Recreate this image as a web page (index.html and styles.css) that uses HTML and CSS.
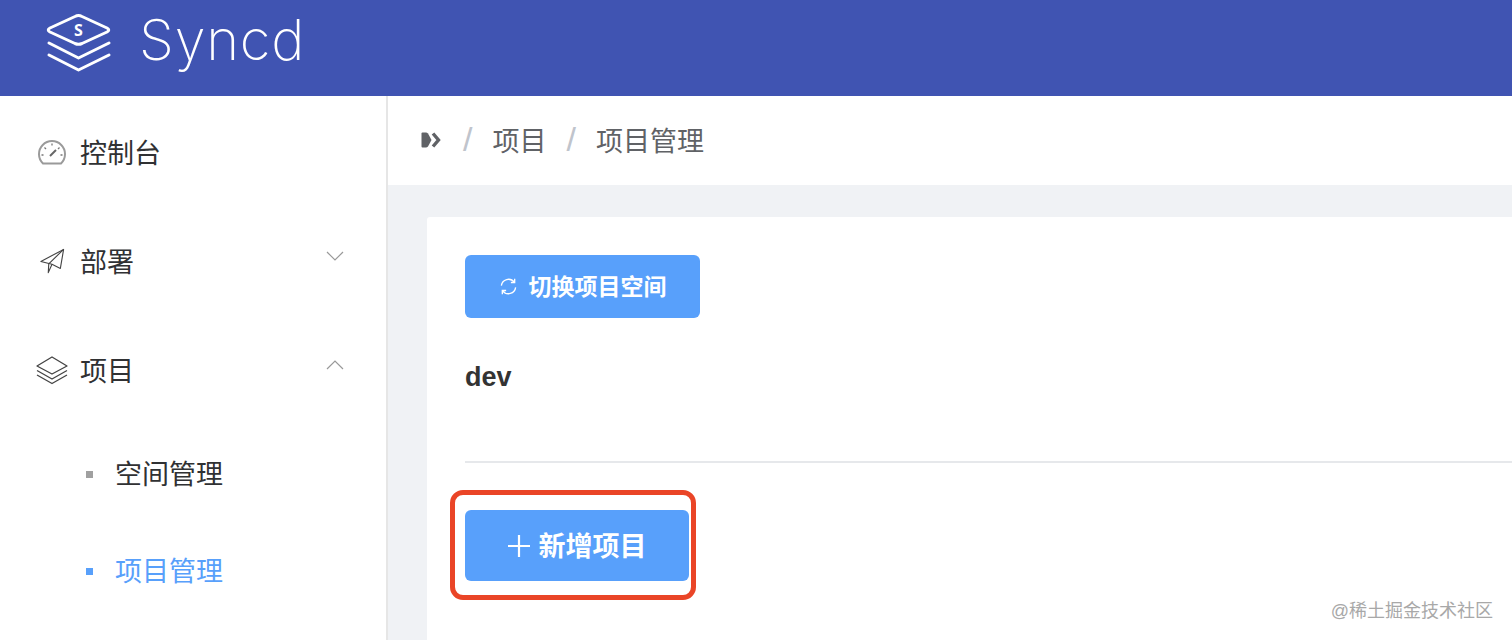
FILE: index.html
```html
<!DOCTYPE html>
<html lang="zh-CN">
<head>
<meta charset="utf-8">
<title>Syncd</title>
<link rel="stylesheet" href="styles.css">
</head>
<body>
<header class="topbar">
  <svg class="logo-mark" viewBox="0 0 65 60" fill="none" stroke="#fff" stroke-width="3" stroke-linejoin="round" stroke-linecap="round">
    <path d="M28 3.500 Q31.500 1.500 35 3.500 L60 15 Q63.500 17 60 19 L35 30.500 Q31.500 32 28 30.500 L3 19 Q-0.500 17 3 15 Z"/>
    <path d="M2 30 L31.500 45 L62 30"/>
    <path d="M2 42 L31.500 57 L62 42"/>
    <text class="logo-s" x="31.500" y="23" text-anchor="middle">S</text>
  </svg>
  <span class="brand">Syncd</span>
</header>
<div class="layout">
  <nav class="sidebar">
    <a class="nav-item">
      <svg class="nav-icon" viewBox="0 0 28 26" fill="none" stroke="#9a9a9a" stroke-width="2">
        <path d="M5 24.500 A13 13 0 1 1 23 24.500 Z" stroke-linejoin="round"/>
        <path d="M12 17 L18 11" stroke="#666" stroke-width="2"/>
        <path d="M14 4.500 V6.500 M6.500 8.500 L8 10 M21.500 8.500 L20 10 M3.500 16 H5.500 M22.500 16 H24.500" stroke="#777" stroke-width="1.300"/>
      </svg>
      <span>控制台</span>
    </a>
    <a class="nav-item">
      <svg class="nav-icon" viewBox="0 0 28 28" fill="none" stroke="#444" stroke-width="1.200" stroke-linejoin="round">
        <path d="M2 14.500 L26.500 1.500 L23 22 L14 17.500 Z"/>
        <path d="M26.500 1.500 L10.500 17 L10 26.500 L14 17.500"/>
      </svg>
      <span>部署</span>
      <svg class="chevron chevron-down" viewBox="0 0 18 10" fill="none" stroke="#999" stroke-width="1.200"><path d="M1 1 L9 9 L17 1"/></svg>
    </a>
    <a class="nav-item">
      <svg class="nav-icon nav-icon-wide" viewBox="0 0 32 30" fill="none" stroke="#444" stroke-width="1.300" stroke-linejoin="round">
        <path d="M16 2 L31 11 L16 19 L1 11 Z"/>
        <path d="M1 15.500 L16 24 L31 15.500"/>
        <path d="M1 20 L16 28.500 L31 20"/>
      </svg>
      <span>项目</span>
      <svg class="chevron" viewBox="0 0 18 10" fill="none" stroke="#999" stroke-width="1.200"><path d="M1 9 L9 1 L17 9"/></svg>
    </a>
    <a class="sub-item"><i class="bullet"></i><span>空间管理</span></a>
    <a class="sub-item sub-active"><i class="bullet"></i><span>项目管理</span></a>
  </nav>
  <main class="content">
    <div class="breadcrumb">
      <svg class="crumb-icon" viewBox="0 0 20 16" fill="#606266">
        <path d="M1.500 0.500 H5 Q6 0.500 7 1.500 L10.500 8 L7 14.500 Q6 15.500 5 15.500 H1.500 Q0.500 15.500 0.500 14.500 V1.500 Q0.500 0.500 1.500 0.500 Z"/>
        <path d="M12 1.500 L17.500 8 L12 14.500" fill="none" stroke="#606266" stroke-width="3.400"/>
      </svg>
      <span class="crumb-sep">/</span>
      <span class="crumb-text">项目</span>
      <span class="crumb-sep">/</span>
      <span>项目管理</span>
    </div>
    <div class="page">
      <section class="card">
        <button class="btn btn-switch">
          <svg class="btn-icon" viewBox="0 0 20 20" fill="none" stroke="#fff" stroke-width="1.400">
            <path d="M2.500 9 A7.500 7.500 0 0 1 16 5.500"/>
            <path d="M17.500 11 A7.500 7.500 0 0 1 4 14.500"/>
            <path d="M16.500 1.800 V5.800 H12.500"/>
            <path d="M3.500 18.200 V14.200 H7.500"/>
          </svg>
          <span class="btn-label">切换项目空间</span>
        </button>
        <h2 class="space-name">dev</h2>
        <hr class="divider">
        <div class="add-wrap">
          <button class="btn btn-add">
            <svg class="plus" viewBox="0 0 22 22" stroke="#fff" stroke-width="2.200"><path d="M11 0 V22 M0 11 H22"/></svg>
            <span class="btn-label">新增项目</span>
          </button>
          <span class="annotation"></span>
        </div>
      </section>
    </div>
  </main>
</div>
<span class="watermark">@稀土掘金技术社区</span>
</body>
</html>
```
FILE: styles.css
```css
* { box-sizing: border-box; }
html, body { margin: 0; height: 640px; overflow: hidden; }
body {
  position: relative;
  background: #fff;
  font-family: "Liberation Sans", "Noto Sans CJK SC", sans-serif;
  color: #303133;
}
.topbar {
  height: 96px;
  background: #4054b2;
  display: flex;
  align-items: flex-start;
  padding: 13px 0 0 47px;
}
.logo-mark { width: 65px; height: 60px; flex: none; overflow: visible; }
.logo-s { font: 700 16px "Open Sans", sans-serif; fill: #fff; stroke: none; }
.brand {
  margin-left: 27px;
  margin-top: -7px;
  font: 200 56px/68px "Inter", sans-serif;
  letter-spacing: 0.800px;
  color: #fff;
}
.layout { display: flex; height: 544px; }
.sidebar {
  width: 388px;
  flex: none;
  border-right: 2px solid #e6e6e6;
  background: #fff;
  padding-top: 1px;
}
.nav-item {
  display: flex;
  align-items: center;
  height: 109px;
  padding: 0 42px 0 38px;
  font-size: 27px;
  color: #303133;
}
.nav-icon { width: 28px; height: 26px; flex: none; margin-right: 14px; }
.nav-icon-wide { width: 32px; height: 30px; margin-left: -2px; margin-right: 12px; }
.chevron { width: 18px; height: 10px; margin-left: auto; margin-top: -10px; }
.chevron-down { margin-top: -9px; }
.sub-item {
  display: flex;
  align-items: center;
  height: 97px;
  padding-left: 86px;
  font-size: 27px;
  color: #303133;
}
.bullet { width: 7px; height: 7px; background: #a0a0a0; margin-right: 22px; margin-top: 4px; }
.sub-active { color: #58a0fb; }
.sub-active .bullet { background: #58a0fb; }
.content { flex: 1; min-width: 0; background: #f0f2f5; display: flex; flex-direction: column; }
.breadcrumb {
  height: 89px;
  flex: none;
  background: #fff;
  display: flex;
  align-items: center;
  padding: 0 0 2px 33px;
  font-size: 27px;
  color: #606266;
}
.crumb-icon { width: 20px; height: 16px; margin-right: 22px; }
.crumb-sep { color: #c0c4cc; margin-right: 20px; font-size: 34px; font-weight: 400; }
.crumb-text { margin-right: 20px; }
.page { flex: 1; min-height: 0; display: flex; flex-direction: column; padding: 32px 0 0 39px; }
.card {
  flex: 1;
  background: #fff;
  padding: 38px 0 0 38px;
  border-radius: 3px 0 0 0;
}
.btn {
  display: flex;
  align-items: center;
  justify-content: center;
  border: 0;
  border-radius: 6px;
  background: #58a0fb;
  color: #fff;
  font-family: inherit;
  font-weight: 700;
  padding: 0;
}
.btn-label { margin-top: -3px; }
.btn-switch { width: 235px; height: 63px; font-size: 23px; gap: 11px; }
.btn-icon { width: 19px; height: 19px; flex: none; }
.space-name {
  margin: 42px 0 0;
  font-size: 27px;
  line-height: 34px;
  font-weight: 700;
  color: #333;
}
.divider { border: 0; height: 2px; background: #e6e8eb; margin: 67px 0 0; }
.add-wrap { position: relative; width: 224px; margin-top: 47px; }
.btn-add { width: 224px; height: 71px; font-size: 27px; gap: 9px; }
.plus { width: 22px; height: 22px; flex: none; }
.annotation {
  position: absolute;
  inset: -20px -7px -19px -15px;
  border: 5px solid #ea4527;
  border-radius: 13px;
  pointer-events: none;
}
.watermark {
  position: absolute;
  right: 19px;
  top: 600px;
  font-size: 18px;
  line-height: 22px;
  color: #a8a8a8;
}
```
